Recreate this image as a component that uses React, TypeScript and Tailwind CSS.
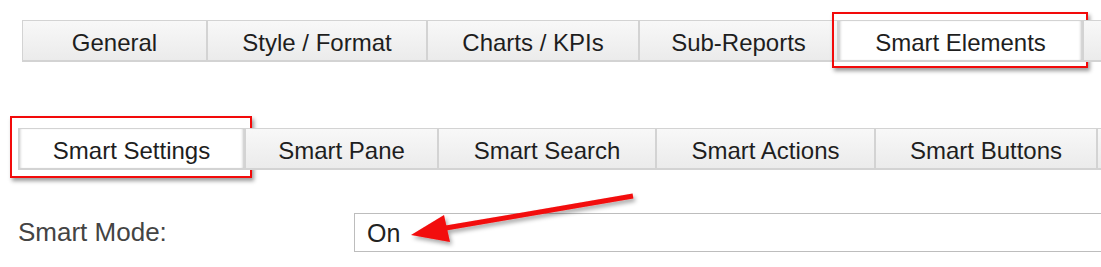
import React from "react";

type TabProps = { label: string; width: string; active?: boolean; highlight?: string };

function Tab({ label, width, active, highlight }: TabProps) {
  return (
    <div
      className={`relative shrink-0 ${width} h-[42px] flex items-center justify-center text-[24px] text-[#1e1e1e] border border-b-2 border-[#d3d3d3] ${
        active
          ? "bg-white shadow-[inset_3px_0_3px_-2px_rgba(0,0,0,0.25),inset_-3px_0_3px_-2px_rgba(0,0,0,0.25)]"
          : "bg-gradient-to-b from-[#f8f8f8] to-[#ebebeb]"
      }`}
    >
      <span className="pt-[5px]">{label}</span>
      {highlight && (
        <div
          className={`absolute ${highlight} border-2 border-[#f20a0a] shadow-[2px_3px_4px_rgba(0,0,0,0.4)] pointer-events-none`}
        />
      )}
    </div>
  );
}

export default function App() {
  return (
    <div className="relative w-[1101px] h-[267px] bg-white overflow-hidden font-['Liberation_Sans',Arial,sans-serif]">
      {/* main tab strip */}
      <div className="flex pl-[22px] pt-[20px]">
        <Tab label="General" width="w-[185px]" />
        <Tab label="Style / Format" width="w-[220px]" />
        <Tab label="Charts / KPIs" width="w-[212px]" />
        <Tab label="Sub-Reports" width="w-[199px]" />
        <Tab
          label="Smart Elements"
          width="w-[245px]"
          active
          highlight="-left-[7px] -right-[6px] -top-[9px] -bottom-[8px]"
        />
        <Tab label="" width="w-[120px]" />
      </div>

      {/* sub tab strip */}
      <div className="flex pl-[18px] mt-[66px]">
        <Tab
          label="Smart Settings"
          width="w-[227px]"
          active
          highlight="-left-[9px] -right-[8px] -top-[13px] -bottom-[10px]"
        />
        <Tab label="Smart Pane" width="w-[193px]" />
        <Tab label="Smart Search" width="w-[218px]" />
        <Tab label="Smart Actions" width="w-[219px]" />
        <Tab label="Smart Buttons" width="w-[222px]" />
        <Tab label="" width="w-[120px]" />
      </div>

      {/* setting row */}
      <div className="flex items-center pl-[18px] mt-[43px]">
        <div className="w-[336px] shrink-0 text-[26px] text-[#444]">Smart Mode:</div>
        <div className="h-[39px] w-[800px] shrink-0 flex items-center pl-[12px] pt-[2px] border border-[#bdbdbd] text-[25px] text-[#222]">
          On
        </div>
      </div>

      {/* annotation arrow */}
      <svg
        className="absolute left-0 top-0 pointer-events-none"
        width="1101"
        height="267"
        viewBox="0 0 1101 267"
      >
        <defs>
          <filter id="sh" x="-10%" y="-50%" width="120%" height="200%">
            <feDropShadow dx="2" dy="3" stdDeviation="2" floodColor="#000" floodOpacity="0.35" />
          </filter>
        </defs>
        <g filter="url(#sh)" fill="#f20a0a">
          <line x1="440" y1="229" x2="633" y2="196" stroke="#f20a0a" strokeWidth="5" />
          <polygon points="411,235 444,215 450,242" />
        </g>
      </svg>
    </div>
  );
}
